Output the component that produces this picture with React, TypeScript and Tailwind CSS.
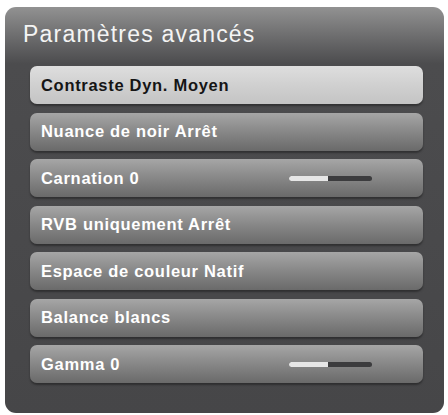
import React from "react";

const items = [
  { label: "Contraste Dyn. Moyen", active: true },
  { label: "Nuance de noir Arrêt" },
  { label: "Carnation 0", slider: 47 },
  { label: "RVB uniquement Arrêt" },
  { label: "Espace de couleur Natif" },
  { label: "Balance blancs" },
  { label: "Gamma 0", slider: 47 },
];

function Row({ label, active, slider }: { label: string; active?: boolean; slider?: number }) {
  return (
    <div
      className={
        "relative flex h-[38px] items-center rounded-[7px] pl-[11px] pr-[51px] shadow-[0_2px_2px_rgba(0,0,0,0.35)] " +
        (active
          ? "bg-gradient-to-b from-[#dedede] via-[#d0d0d0] to-[#c4c4c4] text-[#151515]"
          : "bg-gradient-to-b from-[#a6a6a6] via-[#878787] to-[#6a6a6a] text-white")
      }
    >
      <span className="flex-1 text-[16.5px] font-bold tracking-[0.7px]">{label}</span>
      {slider !== undefined && (
        <div className="flex h-[5px] w-[83px] overflow-hidden rounded-full bg-[#3c3c3e]">
          <div className="h-full bg-[#e6e6e6]" style={{ width: `${slider}%` }} />
        </div>
      )}
    </div>
  );
}

export default function App() {
  return (
    <div className="h-[415px] w-[448px] bg-white pl-[5px] pt-[7px]" style={{ fontFamily: '"Liberation Sans", Arial, sans-serif' }}>
      <div className="h-[406px] w-[439px] rounded-[11px] bg-gradient-to-b from-[#929292] via-[#4c4c4e] via-[14%] to-[#464648] pl-[25px] pr-[21px] pt-[16px]">
        <h1 className="-ml-[7px] text-[23px] leading-[23px] tracking-[1.2px] text-[#f4f4f4]">Paramètres avancés</h1>
        <div className="mt-[20px] flex flex-col gap-[8.5px]">
          {items.map((it) => (
            <Row key={it.label} {...it} />
          ))}
        </div>
      </div>
    </div>
  );
}
